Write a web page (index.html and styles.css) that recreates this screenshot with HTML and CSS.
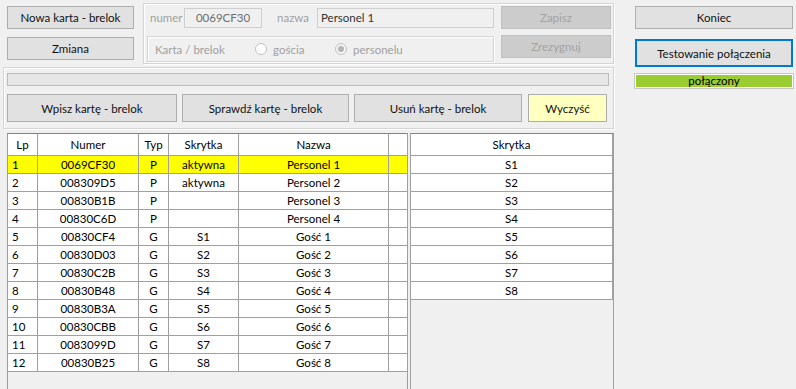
FILE: index.html
```html
<!DOCTYPE html>
<html lang="pl">
<head>
    <meta charset="UTF-8">
    <meta name="viewport" content="width=device-width, initial-scale=1.0">
    <title>Karty - brelok</title>
    <link rel="stylesheet" href="styles.css">
</head>
<body>
    <div class="window">
        <div class="main">
            <div class="top">
                <div class="top-buttons">
                    <button class="btn btn-top">Nowa karta - brelok</button>
                    <button class="btn btn-top">Zmiana</button>
                </div>

                <div class="group card-group">
                    <div class="card-row">
                        <span class="lbl lbl-numer">numer</span>
                        <span class="field field-numer">0069CF30</span>
                        <span class="lbl lbl-nazwa">nazwa</span>
                        <span class="field field-nazwa">Personel 1</span>
                        <button class="btn btn-disabled" disabled>Zapisz</button>
                    </div>
                    <div class="card-row card-row-type">
                        <div class="type-box">
                            <span class="lbl lbl-type">Karta / brelok</span>
                            <span class="radio"></span>
                            <span class="lbl lbl-guest">gościa</span>
                            <span class="radio checked"></span>
                            <span class="lbl">personelu</span>
                        </div>
                        <button class="btn btn-disabled" disabled>Zrezygnuj</button>
                    </div>
                </div>
            </div>

            <div class="group actions-group">
                <div class="progress"></div>
                <div class="action-row">
                    <button class="btn btn-write">Wpisz kartę - brelok</button>
                    <button class="btn btn-check">Sprawdź kartę - brelok</button>
                    <button class="btn btn-remove">Usuń kartę - brelok</button>
                    <button class="btn btn-clear">Wyczyść</button>
                </div>
            </div>

            <div class="grids">
                <div class="grid grid-cards" id="cardGrid">
                    <div class="row head">
                        <div class="cell">Lp</div>
                        <div class="cell">Numer</div>
                        <div class="cell">Typ</div>
                        <div class="cell">Skrytka</div>
                        <div class="cell">Nazwa</div>
                        <div class="cell"></div>
                    </div>
                </div>
                <div class="grid grid-lockers" id="lockerGrid">
                    <div class="row head">
                        <div class="cell">Skrytka</div>
                    </div>
                </div>
            </div>
        </div>

        <div class="side">
            <button class="btn btn-side">Koniec</button>
            <button class="btn btn-side btn-focus">Testowanie połączenia</button>
            <div class="status">połączony</div>
        </div>
    </div>

<script>
    // Lista kart - brelokow
    const cards = [
        ['1', '0069CF30', 'P', 'aktywna', 'Personel 1'],
        ['2', '008309D5', 'P', 'aktywna', 'Personel 2'],
        ['3', '00830B1B', 'P', '', 'Personel 3'],
        ['4', '00830C6D', 'P', '', 'Personel 4'],
        ['5', '00830CF4', 'G', 'S1', 'Gość 1'],
        ['6', '00830D03', 'G', 'S2', 'Gość 2'],
        ['7', '00830C2B', 'G', 'S3', 'Gość 3'],
        ['8', '00830B48', 'G', 'S4', 'Gość 4'],
        ['9', '00830B3A', 'G', 'S5', 'Gość 5'],
        ['10', '00830CBB', 'G', 'S6', 'Gość 6'],
        ['11', '0083099D', 'G', 'S7', 'Gość 7'],
        ['12', '00830B25', 'G', 'S8', 'Gość 8']
    ];

    const cardGrid = document.getElementById('cardGrid');
    cards.forEach((card, i) => {
        const row = document.createElement('div');
        row.className = i === 0 ? 'row selected' : 'row';
        row.innerHTML = card.map(v => `<div class="cell">${v}</div>`).join('') + '<div class="cell"></div>';
        cardGrid.appendChild(row);
    });

    // Lista skrytek
    const lockerGrid = document.getElementById('lockerGrid');
    for (let i = 1; i <= 8; i++) {
        const row = document.createElement('div');
        row.className = 'row';
        row.innerHTML = `<div class="cell">S${i}</div>`;
        lockerGrid.appendChild(row);
    }
</script>
</body>
</html>
```

FILE: styles.css
```css
* {
    box-sizing: border-box;
}

body {
    font-family: Lato, "Liberation Sans", sans-serif;
    font-size: 11.5px;
    font-weight: 400;
    background-color: #f0f0f0;
    color: #000;
    margin: 0;
    padding: 0;
    overflow: hidden;
}

.window {
    display: flex;
    width: 796px;
    height: 389px;
}

.main {
    width: 616px;
}

/* przyciski */
.btn {
    font-family: inherit;
    font-size: 11.5px;
    font-weight: 400;
    color: #111;
    background-color: #e1e1e1;
    border: 1px solid #adadad;
    padding: 0;
    height: 23px;
    cursor: pointer;
}

.btn-disabled {
    width: 110px;
    background-color: #cccccc;
    border-color: #bfbfbf;
    color: #a3a3a3;
    margin-left: 7px;
}

/* gorna czesc */
.top {
    display: flex;
    height: 66px;
}

.top-buttons {
    display: flex;
    flex-direction: column;
    gap: 8px;
    padding: 6px 0 0 7px;
}

.btn-top {
    width: 127px;
}

.group {
    border: 1px solid #d5d5d5;
    box-shadow: inset 1px 1px 0 #fff, 1px 1px 0 #fff;
}

.card-group {
    width: 471px;
    height: 61px;
    margin: 3px 0 0 9px;
    padding: 2px 0 0 3px;
}

.card-row {
    display: flex;
    align-items: center;
    height: 23px;
}

.card-row:first-child {
    padding-left: 3px;
}

.card-row-type {
    align-items: flex-start;
    margin-top: 6px;
}

.lbl {
    color: #a0a0a0;
    white-space: nowrap;
}

.lbl-numer {
    width: 34px;
}

.lbl-nazwa {
    width: 40px;
}

.field {
    height: 20px;
    line-height: 18px;
    background-color: #f0f0f0;
    border: 1px solid #cfcfcf;
}

.field-numer {
    width: 78px;
    margin-right: 15px;
    text-align: center;
    color: #6d6d6d;
}

.field-nazwa {
    width: 177px;
    padding-left: 3px;
    color: #333;
}

.type-box {
    display: flex;
    align-items: center;
    width: 347px;
    height: 26px;
    margin-top: 1px;
    padding-left: 7px;
    border: 1px solid #d5d5d5;
    box-shadow: inset 1px 1px 0 #fff, 1px 1px 0 #fff;
}

.lbl-type {
    width: 100px;
}

.lbl-guest {
    width: 62px;
}

.radio {
    width: 12px;
    height: 12px;
    margin-right: 6px;
    border: 1px solid #c2c2c2;
    border-radius: 50%;
    background-color: #fff;
    position: relative;
}

.radio.checked {
    background-color: #f4f4f4;
}

.radio.checked::after {
    content: "";
    position: absolute;
    left: 2px;
    top: 2px;
    width: 6px;
    height: 6px;
    border-radius: 50%;
    background-color: #b5b5b5;
}

/* panel akcji */
.actions-group {
    width: 611px;
    height: 62px;
    margin: 1px 0 0 3px;
    padding: 5px 0 0 3px;
}

.progress {
    width: 602px;
    height: 13px;
    background-color: #e6e6e6;
    border: 1px solid #bcbcbc;
}

.action-row {
    display: flex;
    margin-top: 8px;
}

.action-row .btn {
    height: 28px;
}

.btn-write {
    width: 170px;
}

.btn-check {
    width: 167px;
    margin-left: 5px;
}

.btn-remove {
    width: 168px;
    margin-left: 5px;
}

.btn-clear {
    width: 79px;
    margin-left: 6px;
    background-color: #ffffc0;
}

/* tabele */
.grids {
    display: flex;
    margin: 4px 0 0 7px;
}

.grid {
    height: 262px;
    background-color: #f0f0f0;
    border: 1px solid #a0a0a0;
    border-top-color: #828282;
}

.grid-cards {
    width: 401px;
}

.grid-lockers {
    width: 204px;
    margin-left: 2px;
}

.row {
    display: grid;
    height: 18px;
}

.row.head {
    height: 22px;
}

.grid-cards .row {
    grid-template-columns: 30px 101px 30px 70px 150px 18px;
}

.grid-lockers .row {
    grid-template-columns: 202px;
}

.cell {
    background-color: #fff;
    border-right: 1px solid #a0a0a0;
    border-bottom: 1px solid #a0a0a0;
    text-align: center;
    line-height: 17px;
    white-space: nowrap;
    overflow: hidden;
}

.head .cell {
    line-height: 21px;
}

.grid-cards .row:not(.head) .cell:first-child {
    text-align: left;
    padding-left: 4px;
}

.grid-cards .cell:last-child {
    border-right: none;
}

.row.selected .cell {
    background-color: #ffff00;
}

/* prawa kolumna */
.side {
    display: flex;
    flex-direction: column;
    width: 158px;
    margin-left: 19px;
    padding-top: 6px;
}

.btn-side {
    width: 158px;
}

.btn-focus {
    height: 28px;
    margin-top: 10px;
    border: 2px solid #0078d7;
}

.status {
    height: 14px;
    margin-top: 7px;
    line-height: 12px;
    text-align: center;
    background-color: #9acd32;
    border: 1px solid #fff;
    box-shadow: 0 0 0 1px #c8c8c8;
}
```
